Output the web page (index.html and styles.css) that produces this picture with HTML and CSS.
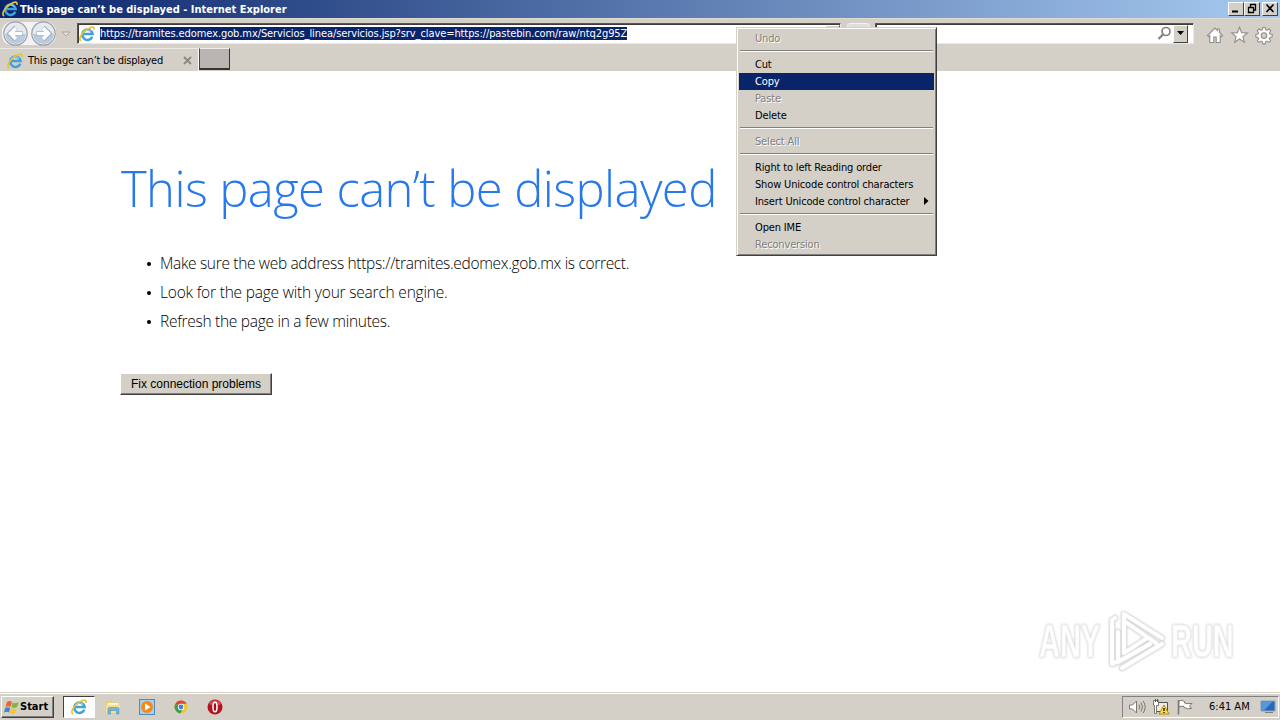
FILE: index.html
```html
<!DOCTYPE html>
<html lang="en">
<head>
    <meta charset="UTF-8">
    <meta name="viewport" content="width=device-width, initial-scale=1.0">
    <title>This page can’t be displayed</title>

    <link rel="stylesheet" href="styles.css">

</head>
<body>
    <!-- shared icons -->
    <svg class="defs">
        <symbol id="ie" viewBox="0 0 16 16">
            <path d="M13.3 10.6A5.2 5.2 0 1 1 13.6 8H4.2" fill="none" stroke="#3fa2df" stroke-width="2.6"/>
            <path d="M4.6 6.2A4.5 4.5 0 0 1 12 5.4" fill="none" stroke="#9bdcf8" stroke-width="1.1"/>
            <path d="M2.2 14.9C-1.4 13.4 3 6.4 8.5 3.1 12.4.5 15.6.2 14.9 3.8" fill="none" stroke="#ecc12f" stroke-width="1.7"/>
        </symbol>
    </svg>

    <div class="titlebar">
        <svg class="ie"><use href="#ie"/></svg>
        <span class="title">This page can’t be displayed - Internet Explorer</span>
        <div class="winbtns">
            <span class="winbtn"><svg width="14" height="11"><path d="M3 8.5h6" stroke="#000" stroke-width="2"/></svg></span>
            <span class="winbtn"><svg width="14" height="11"><path d="M5 1.5h6M5.5 1v3M10.5 1v6H8M3 4.5h5M3.5 4v5.5h5V4" fill="none" stroke="#000" stroke-width="1.3"/></svg></span>
            <span class="winbtn close"><svg width="14" height="11"><path d="M3.5 1.5l7 7.5M10.5 1.5l-7 7.5" stroke="#000" stroke-width="1.7"/></svg></span>
        </div>
    </div>

    <div class="navbar">
        <svg class="arrows" width="72" height="28">
            <rect x="2" y="3" width="54" height="23" rx="9" fill="#f4f3f1"/>
            <g fill="#e6eaee" stroke="#98a1ad" stroke-width="1.2">
                <circle cx="15.5" cy="14.5" r="11.7"/>
                <circle cx="43.5" cy="14.5" r="11.7"/>
            </g>
            <g fill="#bccbdb">
                <path d="M5 15h21a10.5 10 0 0 1-21 0M33 15h21a10.5 10 0 0 1-21 0"/>
            </g>
            <g fill="none" stroke="#9dabbd" stroke-width="5">
                <path d="M22.5 14.5H11M16 8.5l-6 6 6 6M36.5 14.5H48M43 8.5l6 6-6 6"/>
            </g>
            <g fill="none" stroke="#fff" stroke-width="3.6">
                <path d="M22 14.5H11M16 9l-5.5 5.5L16 20M37 14.5h11M43 9l5.5 5.5L43 20"/>
            </g>
            <path d="M62 13h8l-4 4z" fill="#e6e2dc" stroke="#aaa59d"/>
        </svg>
        <div class="field address">
            <svg class="ie"><use href="#ie"/></svg>
            <span class="url">https://tramites.edomex.gob.mx/Servicios_linea/servicios.jsp?srv_clave=https://pastebin.com/raw/ntq2g95Z</span>
            <span class="drop"></span>
        </div>
        <span class="go"></span>
        <div class="field search">
            <svg width="15" height="15"><circle cx="9" cy="5.5" r="4" fill="none" stroke="#85817c" stroke-width="1.7"/><path d="M6 8.5L1.5 13" stroke="#85817c" stroke-width="2.3"/></svg>
            <span class="drop"><svg width="9" height="5"><path d="M1 0h7L4.5 4z"/></svg></span>
        </div>
        <svg class="tools" width="70" height="20">
            <g fill="#fff" stroke="#918e89" stroke-width="1.1">
                <path d="M1.5 10.5L9 3l2.5 2.5V4h2v3.5l3 3-1.2 1.2-1.1-1V17.5h-4V12H7.8v5.5h-4v-6.8l-1.1 1z"/>
                <path d="M33.5 2.2l2.1 5.4 5.8.3-4.5 3.7 1.5 5.6-4.9-3.2-4.9 3.2 1.5-5.6-4.5-3.7 5.8-.3z"/>
                <path d="M56.8 2.5h2.4l.5 2.2 1.3.6 2-1.3 1.7 1.7-1.3 2 .6 1.3 2.2.5v2.4l-2.2.5-.6 1.3 1.3 2-1.7 1.7-2-1.3-1.3.6-.5 2.2h-2.4l-.5-2.2-1.3-.6-2 1.3-1.7-1.7 1.3-2-.6-1.3-2.2-.5V9.500l2.200-.5.6-1.3-1.3-2L53 4l2 1.3 1.3-.6z"/>
                <circle cx="58" cy="10.6" r="2.8" fill="#d4d0c8"/>
            </g>
        </svg>
    </div>

    <div class="tabs">
        <div class="tab">
            <svg class="ie"><use href="#ie"/></svg>
            <span class="tabname">This page can’t be displayed</span>
            <svg class="x" width="9" height="9"><path d="M1 1l7 7M8 1L1 8" stroke="#8c8883" stroke-width="1.8"/></svg>
        </div>
        <div class="newtab"></div>
    </div>

    <div class="page">
        <h1>This page can’t be displayed</h1>
        <ul class="tips">
            <li><span class="tip1">Make sure the web address https://tramites.edomex.gob.mx is correct.</span></li>
            <li><span class="tip2">Look for the page with your search engine.</span></li>
            <li><span class="tip3">Refresh the page in a few minutes.</span></li>
        </ul>
        <button class="fix">Fix connection problems</button>
    </div>

    <div class="watermark">
        <span class="any">ANY</span>
        <svg width="60" height="66" viewBox="0 0 60 66">
            <g fill="none" stroke="#e4e4e4" stroke-width="5.6" stroke-linejoin="round" stroke-linecap="round">
                <path d="M8 10L5 12v44l6-3V24M17 45V6l38 24M17 45l23-15M15 60l40-24M11 54l32-18M17 13l32 22"/>
            </g>
            <g fill="none" stroke="#fff" stroke-width="3.8" stroke-linejoin="round" stroke-linecap="round">
                <path d="M8 10L5 12v44l6-3V24M17 45V6l38 24M17 45l23-15M15 60l40-24M11 54l32-18M17 13l32 22"/>
            </g>
        </svg>
        <span class="run">RUN</span>
    </div>

    <div class="taskbar">
        <div class="start">
            <svg width="17" height="16">
                <path d="M4 3c2-1.5 3.5-1 5 0L7.500 8c-1.500-1-3-1-5 0z" fill="#e9652b"/>
                <path d="M9.8 3.500c2 1 3.500 1 6-.5L14 8c-2 1.200-4 1-5.500.3z" fill="#7cb63d"/>
                <path d="M2.200 9c2-1.300 3.500-1 5 0L6 13.500c-1.500-1-3-1-5 0z" fill="#3f83cc"/>
                <path d="M8.200 9.300c2 1 3.500 1 5.500-.3l-1.500 5c-2 1.200-4 1-5.500 0z" fill="#f6c433"/>
            </svg>
            <span>Start</span>
        </div>
        <div class="task active"><svg class="ie"><use href="#ie"/></svg></div>
        <div class="task">
            <svg width="18" height="18">
                <path d="M2 3h5l1 1.500h6V14H2z" fill="#e9ce70"/>
                <path d="M3.500 5h11v3h-11z" fill="#fff5bd"/>
                <path d="M2 7h14v8H2z" fill="#f4df8c"/>
                <path d="M4 16v-5q0-1.500 1.500-1.500h8Q15 9.500 15 11v5h-2.500v-3.500h-6V16z" fill="#72b6dc" stroke="#4c93c1" stroke-width=".6"/>
            </svg>
        </div>
        <div class="task">
            <svg width="18" height="18">
                <rect x="1.5" y="1.5" width="15" height="15" fill="#a9cee9" stroke="#508bbd"/>
                <circle cx="9" cy="9" r="6" fill="#f08a1b"/>
                <path d="M7 5.500v7L12.500 9z" fill="#fff"/>
            </svg>
        </div>
        <div class="task">
            <svg width="18" height="18">
                <circle cx="9" cy="9" r="6.5" fill="#f1c62e"/>
                <path d="M9 9L3.400 5.700A6.500 6.500 0 0 1 14.600 5.700H9z" fill="#d9473b"/>
                <path d="M3.400 5.700A6.500 6.500 0 0 0 8.300 15.400L11 10.500 9 9z" fill="#3b9c52"/>
                <circle cx="9" cy="9" r="3.2" fill="#fff"/>
                <circle cx="9" cy="9" r="2.4" fill="#447fdb"/>
            </svg>
        </div>
        <div class="task">
            <svg width="18" height="18">
                <circle cx="9" cy="9" r="7.5" fill="#b51220"/>
                <path d="M3 6a6.500 6 0 0 1 12 0q-6 3-12 0" fill="#d84b4c"/>
                <ellipse cx="9" cy="9" rx="2" ry="4.8" fill="#a50c1a" stroke="#fff" stroke-width="1.6"/>
            </svg>
        </div>
        <div class="tray">
            <svg width="68" height="18">
                <g fill="#fff" stroke="#7c7974">
                    <path d="M1.500 7h3l4-4v12l-4-4h-3z"/>
                    <path d="M11 6.500q1.500 2.500 0 5M13 4.500q3 4.500 0 9M15.200 3q4 6 0 12" fill="none"/>
                    <path d="M27.500 4.500h12v9h-12z" fill="#eceae5" stroke="#55534f"/>
                    <path d="M25.500 2.500h5v5h-2v8h-2v-8h-1z"/>
                    <path d="M27.500 1v3M29.500 1v3" stroke="#55534f"/>
                    <path d="M50.500 2v14.500" stroke-width="1.6"/>
                    <path d="M51 3q3-1.500 5.500.5v1.500q3 1 7.500.5L61.500 8l2 2.500q-4 1-7.500-1V8.500q-2-1-5 .5z"/>
                </g>
                <path d="M36 7l5 9H31z" fill="#ffdc3d" stroke="#b68b13"/>
                <path d="M36 10v3M36 14v1" stroke="#000" stroke-width="1.2"/>
            </svg>
            <span class="clock">6:41 AM</span>
            <svg width="16" height="14"><path d="M1 1h14v10H1z" fill="#2868bd" stroke="#8aa3bf"/><path d="M1.500 1.500h11L4 10.500H1.500z" fill="#5299df"/><path d="M5 12.500h8" stroke="#817e78"/></svg>
        </div>
    </div>

    <div class="menu">
        <div class="item off">Undo</div>
        <hr>
        <div class="item">Cut</div>
        <div class="item hover">Copy</div>
        <div class="item off">Paste</div>
        <div class="item">Delete</div>
        <hr>
        <div class="item off">Select All</div>
        <hr>
        <div class="item">Right to left Reading order</div>
        <div class="item">Show Unicode control characters</div>
        <div class="item sub">Insert Unicode control character<svg width="5" height="9"><path d="M0 0l4.500 4L0 8z"/></svg></div>
        <hr>
        <div class="item">Open IME</div>
        <div class="item off">Reconversion</div>
    </div>
</body>
</html>
```
FILE: styles.css
```css
*{padding: 0px; margin: 0px; box-sizing: border-box;}
ul, li{list-style: none;}
svg{display: block; flex: none;}
body{display: flex; flex-direction: column; width: 1280px; height: 720px; overflow: hidden; background: #fff; font: 11px/17px "DejaVu Sans Condensed", "DejaVu Sans", sans-serif; color: #000; white-space: nowrap;}
.defs{position: absolute; width: 0; height: 0;}
.ie{width: 16px; height: 16px;}

.titlebar{display: flex; align-items: center; height: 18px; padding: 0 2px; background: linear-gradient(90deg, #0a246a, #a6caf0);}
.title{margin-left: 2px; font-weight: bold; color: #fff;}
.winbtns{display: flex; margin-left: auto;}
.winbtn{width: 16px; height: 14px; background: #d4d0c8; border: 1px solid; border-color: #fff #404040 #404040 #fff; overflow: hidden;}
.winbtn.close{margin-left: 2px;}

.navbar{display: flex; height: 30px; background: #d4d0c8; border-top: 1px solid #dedbd5;}
.arrows{margin-right: 5px;}
.field{display: flex; align-items: center; height: 21px; margin-top: 4px; background: #fff; border: 1px solid; border-color: #5a5552 #ece9e4 #ece9e4 #5a5552; box-shadow: inset 1px 1px #403c3c;}
.address{width: 764px; padding-left: 1px;}
.url{height: 13px; margin-left: 5px; line-height: 13px; color: #fff; background: #0a246a; letter-spacing: -0.09px;}
.drop{display: flex; align-items: center; justify-content: center; width: 15px; height: 18px; margin-left: auto; background: #d4d0c8; border: 1px solid; border-color: #fff #404040 #404040 #fff;}
.go{width: 23px; height: 20px; margin: 4px 5px 0 6px; background: #e1ded9; border: 1px solid #f4f3f0; border-radius: 3px;}
.search{width: 319px; padding-right: 5px;}
.search > svg{margin-left: auto;}
.search .drop{margin-left: 1px;}
.tools{margin: 6px 0 0 12px;}

.tabs{display: flex; height: 23px; background: #d4d0c8;}
.tab{display: flex; align-items: center; width: 199px; padding: 1px 6px 0 7px; border-top: 1px solid #ece9e4; border-right: 1px solid #fff;}
.tabname{margin-left: 5px; letter-spacing: -0.26px;}
.x{margin-left: auto;}
.newtab{width: 31px; height: 22px; background: #bab5b0; border: 1px solid; border-color: #eee #36332f #36332f #48443f; border-bottom-width: 2px;}

.page{flex: 1; padding: 83px 0 0 120px; font-family: "Open Sans", "Noto Sans", sans-serif; font-weight: 300;}
.page h1{height: 68px; padding-left: 1px; font-size: 49px; line-height: 68px; font-weight: 300; letter-spacing: -0.6px; color: #2778ec;}
.tips{margin-top: 27px; padding-left: 27px;}
.tips li{display: flex; align-items: center; height: 29px; font-size: 15.5px; line-height: 29px;}
.tips li::before{content: ""; width: 4px; height: 4px; margin-right: 9px; border-radius: 2px; background: #000;}
.tip1{letter-spacing: -0.33px;}
.tip2{letter-spacing: -0.2px;}
.tip3{letter-spacing: -0.28px;}
.fix{display: block; width: 152px; height: 22px; margin-top: 37px; background: #d4d0c8; border: 1px solid; border-color: #fff #404040 #404040 #fff; box-shadow: inset -1px -1px #808080; font: 12px/18px "Liberation Sans", sans-serif;}

.taskbar{display: flex; align-items: center; height: 28px; padding: 0 1px 0 1px; background: #d4d0c8; border-top: 1px solid #d4d0c8; box-shadow: inset 0 1px #fff;}
.start{display: flex; align-items: center; width: 53px; height: 22px; padding-left: 1px; margin-right: 9px; border: 1px solid; border-color: #fff #404040 #404040 #fff; box-shadow: inset -1px -1px #808080; font-weight: bold;}
.task{display: flex; align-items: center; justify-content: center; width: 32px; height: 22px; margin-right: 2px;}
.task.active{background: #fff; border: 1px solid; border-color: #404040 #fff #fff #404040;}
.tray{display: flex; align-items: center; width: 157px; height: 22px; margin-left: auto; padding: 0 2px 0 5px; border: 1px solid; border-color: #808080 #fff #fff #808080;}
.clock{margin: 0 auto 0 13px;}

.menu{position: absolute; left: 736px; top: 27px; width: 201px; height: 229px; padding: 2px; background: #d4d0c8; border: 1px solid; border-color: #d4d0c8 #404040 #404040 #d4d0c8; box-shadow: inset 1px 1px #fff, inset -1px -1px #808080;}
.menu .item{height: 17px; padding-left: 16px; letter-spacing: -0.16px;}
.menu .off{color: #808080; text-shadow: 1px 1px #fff;}
.menu .hover{color: #fff; background: #0a246a;}
.menu .sub{display: flex; align-items: center; justify-content: space-between; padding-right: 5px;}
.menu hr{height: 2px; margin: 3px 1px 4px; border: 0; border-top: 1px solid #808080; border-bottom: 1px solid #fff;}

/* logo over the page corner */
.watermark{position: absolute; left: 1039px; top: 607px; display: flex; align-items: center; width: 196px; height: 68px; justify-content: space-between; font: bold 46px/60px "Liberation Sans", sans-serif; color: #fff; -webkit-text-stroke: 1px #f0f0f0; filter: drop-shadow(0 0 1px #c4c4c4);}
.any, .run{width: 64px; transform: scaleX(.63); transform-origin: left;}
```
